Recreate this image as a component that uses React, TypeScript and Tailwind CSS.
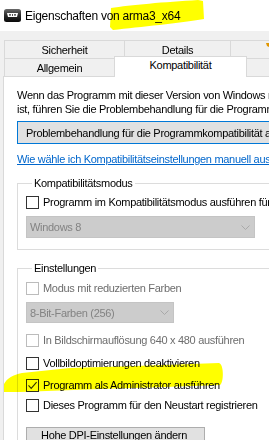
import React from "react";

function CheckBox({ disabled = false, checked = false }: { disabled?: boolean; checked?: boolean }) {
  return (
    <span
      className={
        disabled
          ? "flex h-[13px] w-[13px] shrink-0 items-center justify-center border border-[#bcbcbc] bg-white"
          : "flex h-[13px] w-[13px] shrink-0 items-center justify-center border border-[#333333] bg-white"
      }
    >
      {checked && (
        <svg width="11" height="11" viewBox="0 0 11 11">
          <path d="M1.5 5.3 L4.2 8.3 L9.6 2.2" fill="none" stroke="#333333" strokeWidth="1.1" />
        </svg>
      )}
    </span>
  );
}

function CheckRow({
  label,
  disabled = false,
  checked = false,
  className = "",
}: {
  label: string;
  disabled?: boolean;
  checked?: boolean;
  className?: string;
}) {
  return (
    <div className={`flex h-[14px] items-center gap-[4px] whitespace-nowrap ${className}`}>
      <CheckBox disabled={disabled} checked={checked} />
      <span className={disabled ? "text-[#6d6d6d]" : "text-black"}>{label}</span>
    </div>
  );
}

function Chevron() {
  return (
    <svg width="9" height="5" viewBox="0 0 9 5">
      <path d="M0.5 0.5 L4.5 4.5 L8.5 0.5" fill="none" stroke="#a9a9a9" strokeWidth="1" />
    </svg>
  );
}

function ArmaIcon() {
  return (
    <svg width="17" height="13" viewBox="0 0 17 13">
      <defs>
        <linearGradient id="ig" x1="0" y1="0" x2="0" y2="1">
          <stop offset="0" stopColor="#6a6a6a" />
          <stop offset="0.5" stopColor="#2a2a2a" />
          <stop offset="1" stopColor="#0a0a0a" />
        </linearGradient>
      </defs>
      <rect x="0" y="0" width="17" height="13" rx="2.5" fill="url(#ig)" />
      <path d="M3 4 L14 4 L13 8 L4 8 Z" fill="#ffffff" />
      <path d="M5 5 L7 5 L6.5 7 L5.5 7 Z M8 5 L9 5 L9 7 L8 7 Z M10 5 L12 5 L11.5 7 L10.5 7 Z" fill="#555555" />
    </svg>
  );
}

export default function App() {
  return (
    <div className="relative h-[440px] w-[269px] overflow-hidden bg-[#f0f0f0] font-['Liberation_Sans',Arial,sans-serif] text-[11px] leading-[14px] tracking-[-0.3px] text-black">
      {/* Title bar */}
      <div className="flex h-[31px] items-center gap-[4px] bg-white pl-[4px]">
        <ArmaIcon />
        <span className="whitespace-nowrap text-[12px] leading-[16px] tracking-[-0.25px]">Eigenschaften von arma3_x64</span>
      </div>

      {/* Tabs row 1 */}
      <div className="ml-[4px] mt-[9px] flex h-[18px]">
        <div className="flex w-[120px] shrink-0 items-center justify-center border-l border-t border-[#d9d9d9]">Sicherheit</div>
        <div className="flex w-[106px] shrink-0 items-center justify-center border-l border-t border-[#d9d9d9]">Details</div>
        <div className="flex w-[60px] shrink-0 items-center justify-center border-l border-t border-[#d9d9d9]"></div>
      </div>

      {/* Tabs row 2 */}
      <div className="ml-[4px] flex h-[18px]">
        <div className="flex w-[110px] shrink-0 items-center justify-center border-l border-t border-[#d9d9d9]">Allgemein</div>
        <div className="relative z-10 -mt-[2px] flex h-[21px] w-[133px] shrink-0 justify-center border-x border-t border-[#d9d9d9] bg-white pt-[1px]">
          Kompatibilität
        </div>
        <div className="w-[60px] shrink-0 border-t border-[#d9d9d9]"></div>
      </div>

      {/* Content panel */}
      <div className="ml-[3px] h-[400px] w-[300px] border-l border-t border-[#d9d9d9] bg-white pl-[13px]">
        <div className="mt-[11px] whitespace-nowrap">
          <div>Wenn das Programm mit dieser Version von Windows nicht ordnungsgemäß</div>
          <div>ist, führen Sie die Problembehandlung für die Programmkompatibilität aus.</div>
        </div>

        <div className="mt-[5px] flex h-[23px] w-[280px] items-center whitespace-nowrap border border-[#0078d7] bg-[#e1e1e1] pl-[8px]">
          Problembehandlung für die Programmkompatibilität ausführen
        </div>

        <div className="mt-[8px] whitespace-nowrap text-[#0066cc] underline">
          Wie wähle ich Kompatibilitätseinstellungen manuell aus?
        </div>

        <fieldset className="mt-[10px] w-[275px] border border-[#dcdcdc] pb-[11px] pl-[8px]">
          <legend className="ml-[6px] px-[2px]">Kompatibilitätsmodus</legend>
          <CheckRow className="mt-[5px]" label="Programm im Kompatibilitätsmodus ausführen für:" />
          <div className="mt-[7px] flex h-[22px] w-[229px] items-center justify-between border border-[#c4c4c4] bg-[#cccccc] pl-[3px] pr-[4px] text-[#838383]">
            <span>Windows 8</span>
            <Chevron />
          </div>
        </fieldset>

        <fieldset className="mt-[11px] w-[275px] border border-[#dcdcdc] pb-[20px] pl-[8px]">
          <legend className="ml-[6px] px-[2px]">Einstellungen</legend>
          <CheckRow className="mt-[6px]" disabled label="Modus mit reduzierten Farben" />
          <div className="mt-[7px] flex h-[21px] w-[148px] items-center justify-between border border-[#c4c4c4] bg-[#cccccc] pl-[3px] pr-[4px] text-[#838383]">
            <span>8-Bit-Farben (256)</span>
            <Chevron />
          </div>
          <CheckRow className="mt-[10px]" disabled label="In Bildschirmauflösung 640 x 480 ausführen" />
          <CheckRow className="mt-[9px]" label="Vollbildoptimierungen deaktivieren" />
          <CheckRow className="mt-[8px]" checked label="Programm als Administrator ausführen" />
          <CheckRow className="mt-[6px]" label="Dieses Programm für den Neustart registrieren" />
          <div className="mt-[15px] h-[24px] w-[179px] whitespace-nowrap border border-[#adadad] bg-[#e1e1e1] pl-[14px]">
            Hohe DPI-Einstellungen ändern
          </div>
        </fieldset>
      </div>

      {/* Highlighter marks */}
      <svg
        className="pointer-events-none absolute left-0 top-0 mix-blend-multiply"
        width="269"
        height="440"
        viewBox="0 0 269 440"
      >
        <path
          d="M111 8 C130 5 165 2 198 0 L203 1 L204 19 C180 23 140 27 113 30 L110 27 Z"
          fill="#ffff00"
        />
        <path
          d="M4 384 C7 378 13 375 22 373 L70 368 L135 366 L219 363 C224 364 224 383 220 385 L165 387 L100 389 L20 392 L4 392 Z"
          fill="#ffff00"
        />
        <path d="M266 43 L269 43 L269 47 L267 46 Z" fill="#f0a000" />
      </svg>
    </div>
  );
}
